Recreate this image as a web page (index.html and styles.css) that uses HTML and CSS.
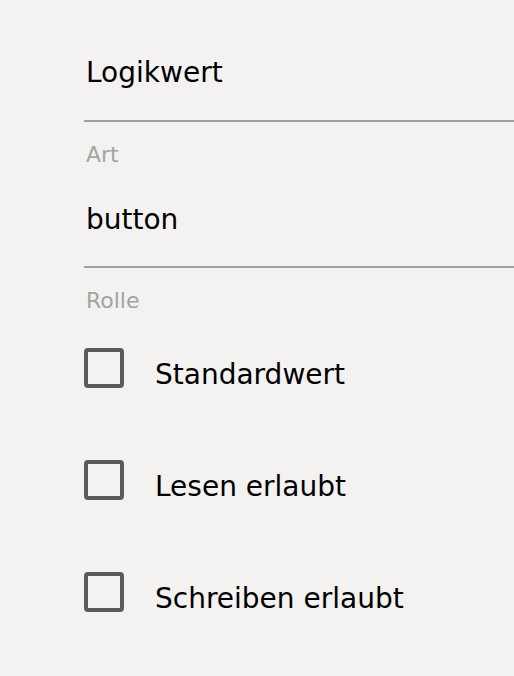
FILE: index.html
```html
<!DOCTYPE html>
<html lang="de">
<head>
<meta charset="utf-8">
<link rel="stylesheet" href="styles.css">
</head>
<body>
<div class="panel">
  <div class="field first">
    <div class="value">Logikwert</div>
  </div>
  <div class="label">Art</div>
  <div class="field">
    <div class="value">button</div>
  </div>
  <div class="label">Rolle</div>
  <div class="checks">
    <label class="check"><span class="box"></span><span class="text">Standardwert</span></label>
    <label class="check"><span class="box"></span><span class="text">Lesen erlaubt</span></label>
    <label class="check"><span class="box"></span><span class="text">Schreiben erlaubt</span></label>
  </div>
</div>
</body>
</html>
```
FILE: styles.css
```css
html, body {
  margin: 0;
  padding: 0;
  background: #f3f2f0;
}
body {
  font-family: "DejaVu Sans", sans-serif;
  color: #000;
}
.panel {
  padding-left: 84px;
  display: flex;
  flex-direction: column;
}
.field {
  border-bottom: 2px solid #a09f9d;
  padding-bottom: 26px;
  margin-top: 30px;
}
.field.first {
  margin-top: 53px;
  padding-bottom: 27px;
}
.value {
  font-size: 28px;
  line-height: 40px;
  padding-left: 2px;
}
.label {
  font-size: 22px;
  line-height: 30px;
  color: #a3a3a3;
  margin-top: 18px;
  padding-left: 2px;
}
.checks {
  display: flex;
  flex-direction: column;
  gap: 58px;
  margin-top: 32px;
}
.check {
  display: flex;
  align-items: flex-start;
  gap: 31px;
}
.box {
  width: 40px;
  height: 40px;
  box-sizing: border-box;
  border: 4px solid #5b5b5b;
  border-radius: 4px;
  flex: none;
}
.text {
  font-size: 28px;
  line-height: 54px;
}
```
